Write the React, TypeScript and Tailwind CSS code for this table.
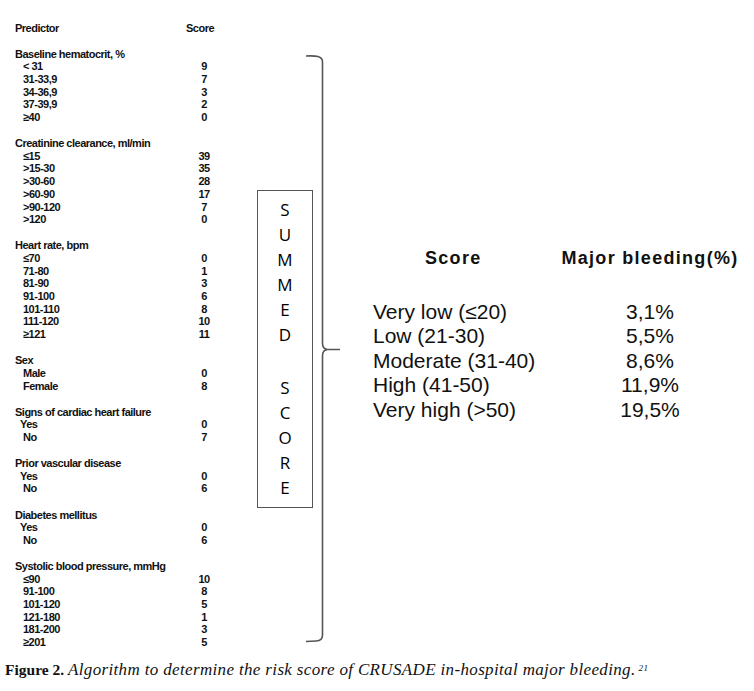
import React from "react";

type Sec = { title: string; rows: [string, string, number?][] };

const sections: Sec[] = [
  { title: "Baseline hematocrit, %", rows: [["< 31", "9"], ["31-33,9", "7"], ["34-36,9", "3"], ["37-39,9", "2"], ["≥40", "0"]] },
  { title: "Creatinine clearance, ml/min", rows: [["≤15", "39"], [">15-30", "35"], [">30-60", "28"], [">60-90", "17"], [">90-120", "7"], [">120", "0"]] },
  { title: "Heart rate, bpm", rows: [["≤70", "0"], ["71-80", "1"], ["81-90", "3"], ["91-100", "6"], ["101-110", "8"], ["111-120", "10"], ["≥121", "11"]] },
  { title: "Sex", rows: [["Male", "0"], ["Female", "8"]] },
  { title: "Signs of cardiac heart failure", rows: [["Yes", "0", 5], ["No", "7"]] },
  { title: "Prior vascular disease", rows: [["Yes", "0", 5], ["No", "6"]] },
  { title: "Diabetes mellitus", rows: [["Yes", "0", 5], ["No", "6"]] },
  { title: "Systolic blood pressure, mmHg", rows: [["≤90", "10"], ["91-100", "8"], ["101-120", "5"], ["121-180", "1"], ["181-200", "3"], ["≥201", "5"]] },
];

const risk: [string, string][] = [
  ["Very low (≤20)", "3,1%"],
  ["Low (21-30)", "5,5%"],
  ["Moderate (31-40)", "8,6%"],
  ["High (41-50)", "11,9%"],
  ["Very high (>50)", "19,5%"],
];

const letters = ["S", "U", "M", "M", "E", "D", "", "S", "C", "O", "R", "E"];

export default function App() {
  return (
    <div className="w-[754px] h-[691px] bg-white flex flex-col overflow-hidden">
      <div className="flex flex-row items-start h-[660px]">
        {/* Left predictor table */}
        <div
          className="w-[218px] pl-[15px] pt-[21.6px] text-[11px] font-bold text-[#111] tracking-[-0.5px]"
          style={{ fontFamily: '"Liberation Sans", Arial, sans-serif' }}
        >
          <div className="flex h-[12.7px] leading-[12.7px] items-center">
            <div className="flex-1">Predictor</div>
            <div className="w-[32px] text-left">Score</div>
          </div>
          <div className="flex flex-col gap-[13.4px] mt-[13.3px]">
            {sections.map((s) => (
              <div key={s.title} className="flex flex-col">
                <div className="h-[12.7px] leading-[12.7px] whitespace-nowrap">{s.title}</div>
                {s.rows.map(([l, v, ind], i) => (
                  <div key={i} className="flex h-[12.7px] leading-[12.7px]">
                    <div className="flex-1 whitespace-nowrap" style={{ paddingLeft: ind ?? 8 }}>
                      {l}
                    </div>
                    <div className="w-[28px] text-center">{v}</div>
                  </div>
                ))}
              </div>
            ))}
          </div>
        </div>

        {/* SUMMED SCORE box */}
        <div
          className="ml-[39px] mt-[190px] w-[56px] h-[318px] border-[1.5px] border-[#555] flex flex-col items-center pt-[6px] text-[17px] text-[#000]"
          style={{ fontFamily: '"Open Sans", sans-serif' }}
        >
          {letters.map((c, i) => (
            <div key={i} className={c === "" ? "h-[28px]" : "h-[25px] leading-[25px]"}>
              {c}
            </div>
          ))}
        </div>

        {/* Bracket drawing */}
        <svg className="-ml-[13px] mt-[50px] shrink-0" width="45" height="600" viewBox="0 0 45 600">
          <path
            d="M6 6 C16 5.5 22.5 6 22.5 12 V 293 Q22.5 299 27 299.3 L40 299.5 M27 299.7 Q22.5 300 22.5 306 V 585 Q22.5 591 16 591 L6 591.5"
            fill="none"
            stroke="#555"
            strokeWidth="1.6"
          />
        </svg>

        {/* Right risk table */}
        <div
          className="ml-[28px] mt-[246px] text-[#111]"
          style={{ fontFamily: '"Liberation Sans", Arial, sans-serif' }}
        >
          <div className="flex h-[24px] leading-[24px] text-[18px] font-bold tracking-[1.3px]">
            <div className="w-[187px] pl-[52px]">Score</div>
            <div className="w-[180px] text-center whitespace-nowrap">Major bleeding(%)</div>
          </div>
          <div className="flex flex-col mt-[29.7px] text-[21px]">
            {risk.map(([l, v]) => (
              <div key={l} className="flex h-[24.5px] leading-[24.5px]">
                <div className="w-[187px] whitespace-nowrap">{l}</div>
                <div className="w-[180px] text-center">{v}</div>
              </div>
            ))}
          </div>
        </div>
      </div>

      {/* Caption */}
      <div
        className="pl-[5px] h-[20px] leading-[20px] text-[#111] whitespace-nowrap"
        style={{ fontFamily: '"Liberation Serif", "Times New Roman", serif' }}
      >
        <span className="text-[15.5px] font-bold">Figure 2. </span>
        <span className="italic text-[17px] tracking-[0.35px]">
          Algorithm to determine the risk score of CRUSADE in-hospital major bleeding.
          <sup className="text-[9px] ml-[3px]">21</sup>
        </span>
      </div>
    </div>
  );
}
